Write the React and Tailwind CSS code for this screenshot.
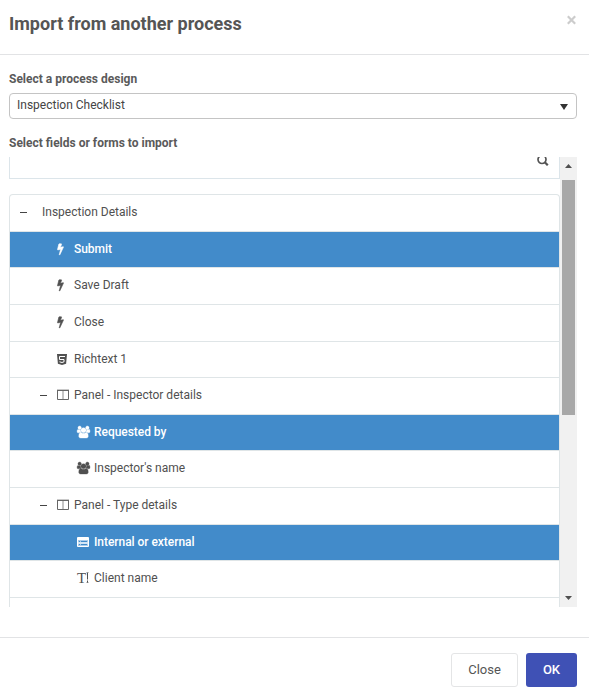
import React from "react";

function Bolt() {
  return (
    <svg className="h-3 w-[7px] overflow-visible" viewBox="448 0 897 1792" fill="currentColor" stroke="currentColor" strokeWidth="90">
      <path d="M1333 566q18 20 7 44l-540 1157q-13 25-42 25-4 0-14-2-17-5-25.500-19t-4.500-30l197-808-406 101q-4 1-12 1-18 0-31-11-18-15-13-39l201-825q4-14 16-23t28-9h328q19 0 32 12.500t13 29.500q0 8-5 18l-171 463 396-98q8-2 12-2 19 0 34 15z" />
    </svg>
  );
}

function Html5() {
  return (
    <svg className="h-[11px] w-[10px]" viewBox="0 0 10 11">
      <path d="M0 0h10l-.9 9.800L5 11 .9 9.800z" fill="currentColor" />
      <path d="M8 2.500H2.500V5.500H7V7.800L5 8.500 2.500 7.800" fill="none" stroke="#fff" strokeWidth="1" />
    </svg>
  );
}

function Columns() {
  return (
    <svg className="h-[11px] w-3" viewBox="0 0 12 11" fill="none" stroke="#666">
      <path d="M.5 1.500h11M.5 1v9.500h11V1" />
      <path d="M0 .5h12" strokeOpacity=".35" />
      <path d="M6 2v8" strokeOpacity=".75" />
    </svg>
  );
}

function Users() {
  return (
    <svg className="h-3 w-[13px] overflow-visible" viewBox="-64 0 1920 1792" fill="currentColor" stroke="currentColor" strokeWidth="50">
      <path d="M529 896q-162 5-265 128h-134q-82 0-138-40.500t-56-118.500q0-353 124-353 6 0 43.500 21t97.500 42.500 119 21.500q67 0 133-23-5 37-5 66 0 159 93 290zm1071 637q0 120-73 189.500t-194 69.500h-874q-121 0-194-69.500t-73-189.500q0-53 3.500-103.500t14-109 26.500-108.500 43-97.500 62-81 85.500-53.500 111.500-20q10 0 43 21.500t73 48 107 48 135 21.500 135-21.500 107-48 73-48 43-21.500q61 0 111.500 20t85.500 53.500 62 81 43 97.500 26.500 108.500 14 109 3.500 103.500zm-1024-1277q0 106-75 181t-181 75-181-75-75-181 75-181 181-75 181 75 75 181zm704 384q0 159-112.500 271.500t-271.500 112.500-271.500-112.500-112.500-271.500 112.500-271.500 271.500-112.500 271.500 112.500 112.500 271.500zm576 225q0 78-56 118.500t-138 40.500h-134q-103-123-265-128 93-131 93-290 0-29-5-66 66 23 133 23 59 0 119-21.500t97.500-42.500 43.500-21q124 0 124 353zm-128-609q0 106-75 181t-181 75-181-75-75-181 75-181 181-75 181 75 75 181z" />
    </svg>
  );
}

function ListBox() {
  return (
    <svg className="h-[10px] w-3" viewBox="0 0 12 10">
      <rect width="12" height="10" rx="1" fill="currentColor" />
      <rect x="1" y="3" width="10" height="6" fill="#a9cbea" />
      <path d="M2 4.500h1M4 4.500h6M2 7.500h1M4 7.500h6" stroke="#428bca" />
      <path d="M1 6h10" stroke="#fff" />
    </svg>
  );
}

function TextField() {
  return (
    <span className="flex items-center">
      <span className="font-['Liberation_Serif',serif] text-[15px] leading-3">T</span>
      <svg className="h-[11px] w-[3px]" viewBox="0 0 3 11" fill="none" stroke="currentColor">
        <path d="M.5 .5h2M.5 10.500h2" strokeOpacity=".6" />
        <path d="M1.500 1v6.500M1.500 8.500v2" />
      </svg>
    </span>
  );
}

const rows = [
  { label: "Inspection Details", h: "h-[37px] pb-[3px]", pad: "pl-[10px]", dash: true },
  { label: "Submit", h: "h-9 pb-px", pad: "pl-[46px]", Icon: Bolt, on: true },
  { label: "Save Draft", h: "h-[37px] pb-[3px]", pad: "pl-[46px]", Icon: Bolt },
  { label: "Close", h: "h-[37px] pb-[3px]", pad: "pl-[46px]", Icon: Bolt },
  { label: "Richtext 1", h: "h-9 pb-px", pad: "pl-[46px]", Icon: Html5 },
  { label: "Panel - Inspector details", h: "h-[37px] pb-[3px]", pad: "pl-[30px]", dash: true, Icon: Columns },
  { label: "Requested by", h: "h-9 pb-px", pad: "pl-[66px]", Icon: Users, on: true },
  { label: "Inspector's name", h: "h-[37px] pb-[3px]", pad: "pl-[66px]", Icon: Users },
  { label: "Panel - Type details", h: "h-[37px] pb-[3px]", pad: "pl-[30px]", dash: true, Icon: Columns },
  { label: "Internal or external", h: "h-9 pb-px", pad: "pl-[66px]", Icon: ListBox, on: true },
  { label: "Client name", h: "h-[37px] pb-[3px]", pad: "pl-[66px]", Icon: TextField },
];

function Row({ label, h, pad, dash, Icon, on }) {
  return (
    <li
      className={`flex shrink-0 items-center border-b border-[#dfe5e7] ${h} ${pad} ${
        on ? "bg-[#428bca] font-medium tracking-[-0.04px] text-white" : ""
      }`}
    >
      {dash && (
        <span className={`flex ${Icon ? "w-4" : "w-[22px]"}`}>
          <span className="mt-0.5 h-px w-[7px] bg-[#444]" />
        </span>
      )}
      {Icon && (
        <span className={`flex w-[18px] items-center ${Icon === Columns ? "pl-[0.5px]" : "pl-px"}`}>
          <Icon />
        </span>
      )}
      <span className="whitespace-nowrap">{label}</span>
    </li>
  );
}

export default function App() {
  return (
    <div className="flex h-[697px] w-[589px] flex-col overflow-hidden bg-white font-['Roboto',sans-serif] text-xs text-[#505050]">
      <header className="flex h-[55px] shrink-0 justify-between border-b border-[#e2e3e5] pr-[13px] pl-[9px]">
        <h1 className="mt-3 text-lg leading-6 font-bold text-[#555]">Import from another process</h1>
        <svg className="mt-[15px] h-[10px] w-[9px]" viewBox="0 0 9 10" stroke="#ccc" strokeWidth="2.200">
          <path d="M.8 1.300l7.400 7.400M8.200 1.300L.8 8.700" />
        </svg>
      </header>

      <main className="flex h-[582px] shrink-0 flex-col pr-3 pl-[9px]">
        <label className="mt-4 h-[22px] leading-4 font-bold text-[#5a5a5a]">Select a process design</label>
        <div className="flex h-[26px] shrink-0 items-center justify-between rounded border border-[#c4c4c4] pr-2 pb-0.5 pl-[7px] text-[#444]">
          <span>Inspection Checklist</span>
          <svg className="mt-1 h-1.5 w-2" viewBox="0 0 8 6" fill="#333">
            <path d="M0 0h8L4 6z" />
          </svg>
        </div>
        <label className="mt-4 h-[22px] leading-4 font-bold text-[#5a5a5a]">Select fields or forms to import</label>

        <div className="flex h-[450px] shrink-0">
          <div className="flex w-[551px] flex-col overflow-hidden">
            <div className="flex h-[22px] shrink-0 items-start justify-end border border-t-0 border-[#dce5ea] pr-[10px]">
              <svg className="-mt-0.5 h-[11px] w-[12px]" viewBox="0 0 12 11" fill="none" stroke="#555">
                <circle cx="5" cy="4.500" r="4" strokeWidth="1.700" />
                <path d="M7.800 7.300l3 3" strokeWidth="2.200" />
              </svg>
            </div>
            <ul className="mt-[15px] flex min-h-0 flex-1 flex-col overflow-hidden rounded-t border border-b-0 border-[#dfe5e7]">
              {rows.map((r) => (
                <Row key={r.label} {...r} />
              ))}
            </ul>
          </div>
          <div className="flex w-[17px] flex-col items-center bg-[#f1f1f1]">
            <svg className="mt-[7px] h-1 w-[7px] shrink-0" viewBox="0 0 7 4" fill="#505050">
              <path d="M3.500 0L7 4H0z" />
            </svg>
            <div className="mt-3 h-[235px] w-[13px] bg-[#a8a8a8]" />
            <svg className="mt-auto mb-[7px] h-1 w-[7px] shrink-0" viewBox="0 0 7 4" fill="#505050">
              <path d="M3.500 4L7 0H0z" />
            </svg>
          </div>
        </div>
      </main>

      <footer className="flex flex-1 items-start justify-end gap-2 border-t border-[#e2e3e5] pt-[15px] pr-3 text-[13px]">
        <button className="h-[34px] w-[67px] rounded-[3px] border border-[#e4e5e6] text-[#555]">Close</button>
        <button className="h-[34px] w-[51px] rounded-[3px] bg-[#3f51b5] font-medium text-white">OK</button>
      </footer>
    </div>
  );
}
